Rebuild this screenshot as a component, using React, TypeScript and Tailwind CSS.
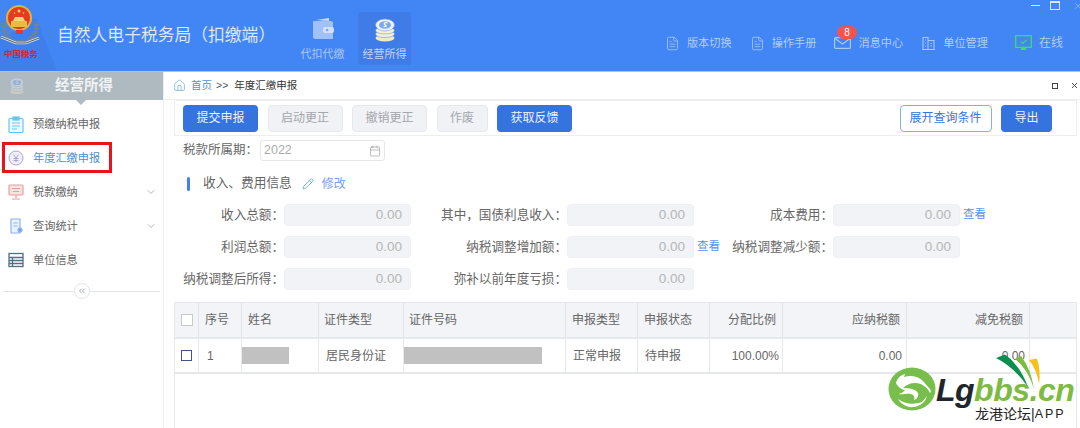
import React from 'react';
import { Calendar, ChevronDown, ChevronsLeft, FileText, Home, Pencil, X } from 'lucide-react';

const cjk = '[font-family:"Liberation_Sans","Noto_Sans_CJK_SC",sans-serif]';
const COLON = '\uFF1A';

const menu = [
  { name: '预缴纳税申报', icon: 'clip' },
  { name: '年度汇缴申报', icon: 'yen', active: true },
  { name: '税款缴纳', icon: 'screen', arrow: true },
  { name: '查询统计', icon: 'doc', arrow: true },
  { name: '单位信息', icon: 'list' },
];

const columns = [
  { title: '序号', w: 'w-[43px]', align: 'text-left pl-[6px]' },
  { title: '姓名', w: 'w-[77px]', align: 'text-left pl-[6px]' },
  { title: '证件类型', w: 'w-[85px]', align: 'text-left pl-[5px]' },
  { title: '证件号码', w: 'w-[162px]', align: 'text-left pl-[5px]' },
  { title: '申报类型', w: 'w-[72px]', align: 'text-left pl-[6px]' },
  { title: '申报状态', w: 'w-[72px]', align: 'text-left pl-[6px]' },
  { title: '分配比例', w: 'w-[73px]', align: 'text-right pr-[6px]' },
  { title: '应纳税额', w: 'w-[124px]', align: 'text-right pr-[6px]' },
  { title: '减免税额', w: 'w-[123px]', align: 'text-right pr-[6px]' },
  { title: '', w: 'flex-1', align: '' },
];

function MenuIcon({ type }: { type: string }) {
  if (type === 'clip') {
    return (
      <svg width="16" height="17" viewBox="0 0 16 17" fill="none" stroke="#6cc4ee" strokeWidth="1.2">
        <rect x="1" y="2.5" width="14" height="14" rx="1" fill="#eff9fe" />
        <rect x="5" y="1" width="6" height="3" fill="#6cc4ee" />
        <path d="M4 7h8M4 10h8M4 13h5" />
      </svg>
    );
  }
  if (type === 'yen') {
    return (
      <svg width="16" height="16" viewBox="0 0 16 16" fill="none" stroke="#a9a3dc" strokeWidth="1">
        <circle cx="8" cy="8" r="7" fill="#f1f0fa" />
        <path d="M5.5 4.5 8 8l2.5-3.5M8 8v4M5.5 8.5h5M5.5 10.5h5" />
      </svg>
    );
  }
  if (type === 'screen') {
    return (
      <svg width="16" height="16" viewBox="0 0 16 16" fill="none" stroke="#ee9c99" strokeWidth="1.2">
        <rect x="1" y="1" width="14" height="10" rx="1" fill="#fbe3e2" />
        <path d="M4 4.5h8M5 7.5h6M8 11v3M4 15h8" />
      </svg>
    );
  }
  if (type === 'doc') {
    return (
      <svg width="15" height="16" viewBox="0 0 15 16" fill="none" stroke="#8db5f0" strokeWidth="1.2">
        <path d="M2 1h9v14H2z" fill="#e8f1fd" />
        <path d="M4.500 5h4M4.500 8h4" />
        <circle cx="11" cy="12" r="2" fill="#6ea2ee" />
      </svg>
    );
  }
  return (
    <svg width="16" height="16" viewBox="0 0 16 16" fill="none" stroke="#4f6f82" strokeWidth="1.3">
      <rect x="1" y="1.500" width="14" height="13" />
      <path d="M1 5.500h14M1 8.500h14M1 11.500h14M4.500 5.500v9" />
    </svg>
  );
}

function Emblem() {
  return (
    <div className="relative w-[57px] h-[71px] shrink-0">
      <svg width="57" height="71" viewBox="0 0 57 71">
        <path d="M36 18 57 71H0V40z" fill="#3f7fec" />
        <path d="M4 22c-2 9 3 17 10 20h12c7-3 12-11 10-20" fill="none" stroke="#75838e" strokeWidth="4.500" strokeDasharray="2.500 1" />
        <path d="M1 37l15 6h10l13-5" fill="none" stroke="#dfe4e8" strokeWidth="2.500" />
        <path d="M1 37l15 6h10l13-5" fill="none" stroke="#4f5c68" strokeWidth="1" />
        <circle cx="19" cy="18" r="12" fill="#e63b1f" stroke="#e5b13c" strokeWidth="2" />
        <path d="M11 21h16v6H11z" fill="#e8bb48" />
        <path d="M13 21h12l-2-4h-8z" fill="#f3d57a" />
        <circle cx="19" cy="11" r="1.500" fill="#f6d75a" />
        <circle cx="14.500" cy="13" r="0.800" fill="#f6d75a" />
        <circle cx="23.500" cy="13" r="0.800" fill="#f6d75a" />
        <rect x="16" y="30" width="7" height="4" fill="#e63b1f" />
      </svg>
      <span className="absolute left-[4px] top-[48px] text-[8.500px] leading-[12px] font-bold text-[#d3262c] whitespace-nowrap">中国税务</span>
    </div>
  );
}

function TopLink({ label, icon }: { label: string; icon: React.ReactNode }) {
  return (
    <div className="flex items-center gap-[7px] text-[11.200px] text-[#b3cdf8] whitespace-nowrap">
      {icon}
      <span>{label}</span>
    </div>
  );
}

function Btn({ children, w, kind }: { children: string; w: string; kind: 'blue' | 'gray' }) {
  const look = kind === 'blue' ? 'bg-[#3574de] text-[#eef3fc]' : 'bg-[#f1f2f5] border border-[#e8e9ed] text-[#a3a6ab]';
  return <button className={`h-[27px] rounded-[4px] text-[12px] ${w} ${look}`}>{children}</button>;
}

function Amount({ label, link }: { label: string; link?: boolean }) {
  return (
    <div className="flex items-center h-[22px]">
      <span className="w-[133px] shrink-0 text-right text-[12.600px] text-[#666] whitespace-nowrap">{label}{COLON}</span>
      <div className="w-[127px] shrink-0 h-[22px] rounded-[4px] bg-[#f2f3f6] border border-[#eef0f3] flex items-center justify-end pr-[8px] text-[13.500px] text-[#b6b6b6]">0.00</div>
      {link && <span className="ml-[3px] text-[11.500px] text-[#5a93e6] whitespace-nowrap">查看</span>}
    </div>
  );
}

export default function App() {
  return (
    <div className={`relative w-[1080px] h-[428px] overflow-hidden bg-white ${cjk}`}>
      {/* top bar */}
      <header className="relative h-[72px] bg-[#4285f4] border-b border-[#a6c6fa] flex">
        <Emblem />
        <h1 className="mt-[24px] text-[16.800px] leading-[24px] text-[#dde8fc] whitespace-nowrap w-[238px]">{'自然人电子税务局\uFF08扣缴端\uFF09'}</h1>
        <div className="ml-[1px] flex gap-[9px] pt-[12px]">
          <div className="w-[53px] h-[53px] flex flex-col items-center pt-[6px] text-[11px] text-[#a9c6f8]">
            <svg width="22" height="22" viewBox="0 0 22 22">
              <path d="M1 3h18a2 2 0 0 1 2 2v15a1 1 0 0 1-1 1H3a2 2 0 0 1-2-2z" fill="#a0c1f9" />
              <path d="M4 2l13-2v3z" fill="#c9dcfc" />
              <rect x="11" y="9" width="11" height="6" rx="2" fill="#d3e2fc" />
              <circle cx="15" cy="12" r="1.300" fill="#7ba6f2" />
            </svg>
            <span className="mt-[6px] whitespace-nowrap">代扣代缴</span>
          </div>
          <div className="w-[53px] h-[53px] rounded-[3px] bg-[#3f7ce8] flex flex-col items-center pt-[6px] text-[11px] text-[#c4d7fa]">
            <Coins />
            <span className="mt-[4px] whitespace-nowrap">经营所得</span>
          </div>
        </div>
        <div className="ml-auto mr-[17px] mt-[36px] h-[14px] flex items-center">
          <TopLink label="版本切换" icon={<FileText size={15} strokeWidth={1.300} color="#a9c8fa" />} />
          <div className="w-[18px]" />
          <TopLink label="操作手册" icon={<FileText size={15} strokeWidth={1.300} color="#a9c8fa" />} />
          <div className="w-[18px]" />
          <TopLink
            label="消息中心"
            icon={
              <svg width="17" height="12" viewBox="0 0 17 12" fill="none" stroke="#a9c8fa" strokeWidth="1.200">
                <rect x="0.600" y="0.600" width="15.800" height="10.800" rx="1" />
                <path d="M1 1.500 8.500 7 16 1.500" />
              </svg>
            }
          />
          <div className="w-[18px]" />
          <TopLink
            label="单位管理"
            icon={
              <svg width="15" height="14" viewBox="0 0 15 14" fill="none" stroke="#a9c8fa" strokeWidth="1.100">
                <path d="M1 13.500h13M2 13V1.500h5V13M7 4.500h6V13M4 4h1M4 7h1M4 10h1M9.500 7.500h1.500M9.500 10h1.500" />
              </svg>
            }
          />
          <div className="w-[27px]" />
          <div className="flex items-center gap-[7px] text-[12px] text-[#b3cdf8]">
            <svg width="17" height="16" viewBox="0 0 17 16" fill="none">
              <rect x="0.700" y="0.700" width="15.600" height="11.600" stroke="#3fdc6a" strokeWidth="1.300" />
              <path d="M5.500 6.500 7.800 8.500 11.500 4.800" stroke="#3fdc6a" strokeWidth="1.200" />
              <rect x="6" y="12.500" width="5" height="2.500" fill="#3fdc6a" />
            </svg>
            <span className="whitespace-nowrap">在线</span>
          </div>
        </div>
        {/* window buttons */}
        <div className="absolute right-0 top-0 flex items-start text-[#dbe7fc]">
          <div className="mt-[5px] mr-[10px] w-[9px] h-[1px] bg-[#dbe7fc]" />
          <div className="mt-[1px] mr-[13px] w-[10px] h-[9px] border border-[#dbe7fc] border-t-2" />
          <X size={10} strokeWidth={1} className="mt-[1px] -mr-[3px]" />
        </div>
      </header>

      <div className="flex h-[356px]">
        {/* sidebar */}
        <aside className="w-[164px] shrink-0 border-r border-[#eceef0] flex flex-col">
          <div className="relative h-[28px] bg-[#aeb9c0] flex items-center pl-[9px] text-[14.500px] font-bold text-[#f0f3f4]">
            <div className="opacity-40 scale-[0.72] origin-left w-[16px]"><Coins /></div>
            <span className="ml-[30px]">经营所得</span>
            <span className="absolute left-[76px] top-[28px] w-0 h-0 border-x-[5px] border-x-transparent border-t-[5px] border-t-[#aeb9c0]" />
          </div>
          <nav className="pt-[7px]">
            {menu.map((m) => (
              <div
                key={m.name}
                className={`relative h-[34px] flex items-center pl-[8px] text-[11.200px] ${m.active ? 'text-[#4c90c9]' : 'text-[#666]'}`}
              >
                <span className="w-[16px] flex justify-center"><MenuIcon type={m.icon} /></span>
                <span className="ml-[9px] whitespace-nowrap">{m.name}</span>
                {m.arrow && <ChevronDown size={12} strokeWidth={1.300} color="#8b8f94" className="ml-auto mr-[6px]" />}
                {m.active && <span className="absolute left-[2px] top-[1px] w-[110px] h-[31px] border-[3px] border-[#e8131f]" />}
              </div>
            ))}
          </nav>
          <div className="relative mx-[3px] mt-[14px] h-[1px] bg-[#e3e5e8]">
            <span className="absolute left-[71px] -top-[8px] w-[16px] h-[16px] rounded-full bg-white border border-[#e3e5e8] flex items-center justify-center">
              <ChevronsLeft size={10} color="#9aa0a6" />
            </span>
          </div>
        </aside>

        {/* main */}
        <main className="flex-1 min-w-0 flex flex-col text-[12px]">
          <div className="h-[28px] pl-[9px] pr-[1px] flex items-center border-b border-[#eceef0] text-[10.500px]">
            <Home size={13} strokeWidth={1.200} color="#5aa6d8" />
            <span className="ml-[5px] text-[#4f95cf]">首页</span>
            <span className="ml-[4px] text-[#555]">&gt;&gt;</span>
            <span className="ml-[6px] text-[#333]">年度汇缴申报</span>
            <span className="ml-auto w-[6px] h-[6px] border-[1.500px] border-[#444]" />
            <X size={9} strokeWidth={2.500} color="#444" className="ml-[12px]" />
          </div>

          <div className="ml-[10px] mr-[3px] h-[36px] border border-[#eceef0] flex items-center pl-[8px] pr-[24px]">
            <div className="flex gap-[9.500px] w-full">
              <Btn kind="blue" w="w-[75px]">提交申报</Btn>
              <Btn kind="gray" w="w-[75px]">启动更正</Btn>
              <Btn kind="gray" w="w-[75px]">撤销更正</Btn>
              <Btn kind="gray" w="w-[51px]">作废</Btn>
              <Btn kind="blue" w="w-[75px]">获取反馈</Btn>
              <button className="ml-auto w-[92px] h-[27px] rounded-[4px] border border-[#86aeee] text-[#3574de] text-[12px]">展开查询条件</button>
              <Btn kind="blue" w="w-[51px]">导出</Btn>
            </div>
          </div>

          <div className="ml-[19px] mt-[4px] flex items-center h-[21px] text-[#666] text-[12.500px]">
            <span className="w-[77px] whitespace-nowrap">税款所属期{COLON}</span>
            <div className="w-[125px] h-[21px] rounded-[3px] border border-[#e6e7ea] flex items-center justify-between pl-[3px] pr-[3px] text-[#aaa]">
              2022
              <Calendar size={12} strokeWidth={1.100} color="#888" />
            </div>
          </div>

          <div className="ml-[23px] mt-[15px] flex items-center h-[16px]">
            <span className="w-[3px] h-[14px] rounded-[2px] bg-[#3f83ee]" />
            <span className="ml-[13px] text-[12.700px] text-[#666]">收入、费用信息</span>
            <Pencil size={12} strokeWidth={1.600} color="#4aa8e0" className="ml-[10px]" />
            <span className="ml-[8px] text-[#7aa0ee]">修改</span>
          </div>

          <div className="mt-[12px] grid grid-cols-[283px_266px_1fr] gap-y-[10px] -ml-[13px]">
            <Amount label="收入总额" />
            <Amount label={'其中\uFF0C国债利息收入'} />
            <Amount label="成本费用" link />
            <Amount label="利润总额" />
            <Amount label="纳税调整增加额" link />
            <Amount label="纳税调整减少额" />
            <Amount label="纳税调整后所得" />
            <Amount label="弥补以前年度亏损" />
          </div>

          {/* table */}
          <div className="ml-[10px] mr-[3px] mt-[12px] flex-1 border-l border-t border-r border-[#e6e8ec] text-[#666]">
            <div className="h-[36px] bg-[#f3f4f8] flex border-b-2 border-[#e6e8ec]">
              <div className="w-[24px] flex items-center justify-center border-r border-[#e0e2e6]">
                <span className="w-[12px] h-[12px] border border-[#c9c9c9] bg-white" />
              </div>
              {columns.map((c, i) => (
                <div key={i} className={`${c.w} ${c.align} leading-[34px] border-r border-[#e0e2e6] last:border-r-0 whitespace-nowrap`}>
                  {c.title}
                </div>
              ))}
            </div>
            <div className="h-[35px] flex border-b-2 border-[#e6e8ec]">
              <div className="w-[24px] flex items-center justify-center border-r border-[#e6e8ec]">
                <span className="w-[11px] h-[11px] border-[1.500px] border-[#46508a]" />
              </div>
              <Cell w="w-[43px]" cls="pl-[8px]">1</Cell>
              <div className="w-[77px] flex items-center border-r border-[#e6e8ec]"><span className="w-[47px] h-[17px] bg-[#c1c1c1]" /></div>
              <Cell w="w-[85px]" cls="pl-[7px]">居民身份证</Cell>
              <div className="w-[162px] flex items-center border-r border-[#e6e8ec]"><span className="w-[138px] h-[17px] bg-[#c1c1c1]" /></div>
              <Cell w="w-[72px]" cls="pl-[7px]">正常申报</Cell>
              <Cell w="w-[72px]" cls="pl-[7px]">待申报</Cell>
              <Cell w="w-[73px]" cls="justify-end pr-[3px]">100.00%</Cell>
              <Cell w="w-[124px]" cls="justify-end pr-[4px]">0.00</Cell>
              <Cell w="w-[123px]" cls="justify-end pr-[4px]">0.00</Cell>
              <div className="flex-1" />
            </div>
          </div>
        </main>
      </div>

      {/* forum watermark */}
      <div className="absolute left-[888px] top-[353px] w-[192px] h-[72px]">
        <svg className="absolute left-0 top-[14px]" width="48" height="44" viewBox="0 0 48 44">
          <ellipse cx="24" cy="22" rx="23.500" ry="21.500" fill="#78be4c" />
          <path d="M8 16c1-5 5-8 9-9l-1 3c6-2 13-1 18 3l8 9c1 2 1 3 0 4-2-5-8-10-15-10-5 0-9 2-12 5 6 0 13 1 15 5 1 3-1 6-4 7 1-3 0-5-3-6-4-1-9 1-12 0 2-1 5-2 6-4-3 0-7-3-9-7z" fill="#fff" />
          <path d="M10 32c6 5 16 6 24 3l5-6c-1 5-6 10-13 11-7 1-13-3-16-8z" fill="#fff" />
        </svg>
        <svg className="absolute left-[108px] top-0" width="48" height="40" viewBox="0 0 48 40">
          <path d="M0 5 9 1.500Q24 12 32 34 18 14 0 5z" fill="#0a8f4c" />
          <path d="M19 6l6-3q10 13 13 33Q32 16 19 6z" fill="#7dbb42" />
          <path d="M33 7l8-1.500q4 12.500 2 25.500Q41 17 33 7z" fill="#f5c21b" />
        </svg>
        <div className="absolute left-[48px] top-[22px] flex items-baseline text-[32px] leading-[30px] font-bold italic [font-family:'Liberation_Sans',sans-serif] tracking-[-0.500px] whitespace-nowrap">
          <span className="text-[#20262b]">Lg</span>
          <span className="text-[#7dbb42]">bbs.cn</span>
        </div>
        <div className="absolute left-[87px] top-[54px] flex items-center text-[14px] leading-[14px] text-[#222] whitespace-nowrap">
          龙港论坛|<span className="text-[12.500px] tracking-[2px]">APP</span>
        </div>
      </div>

      {/* message badge */}
      <span className="absolute left-[837px] top-[26px] w-[20px] h-[13px] rounded-full bg-[#f4534e] text-white text-[10px] leading-[13px] text-center">8</span>
    </div>
  );
}

function Cell({ w, cls, children }: { w: string; cls: string; children: React.ReactNode }) {
  return <div className={`${w} ${cls} flex items-center border-r border-[#e6e8ec] whitespace-nowrap`}>{children}</div>;
}

function Coins() {
  return (
    <svg width="22" height="24" viewBox="0 0 22 24">
      <ellipse cx="11" cy="20" rx="9.500" ry="3.500" fill="#f3e9c4" />
      <ellipse cx="11" cy="16" rx="9.500" ry="3.500" fill="#f6efd4" stroke="#6f9bea" strokeWidth="0.600" />
      <ellipse cx="11" cy="12.500" rx="9.500" ry="3.500" fill="#f6efd4" stroke="#6f9bea" strokeWidth="0.600" />
      <ellipse cx="11" cy="7" rx="9.500" ry="6" fill="#eef3fd" stroke="#6f9bea" strokeWidth="0.600" />
      <ellipse cx="11" cy="7" rx="6" ry="3.800" fill="#7ba6f2" />
      <path d="M13.500 5c-2.500-1-4.500 .3-2.500 1.700s2 2.300-1.500 1.800" fill="none" stroke="#fff" strokeWidth="1.100" />
    </svg>
  );
}
